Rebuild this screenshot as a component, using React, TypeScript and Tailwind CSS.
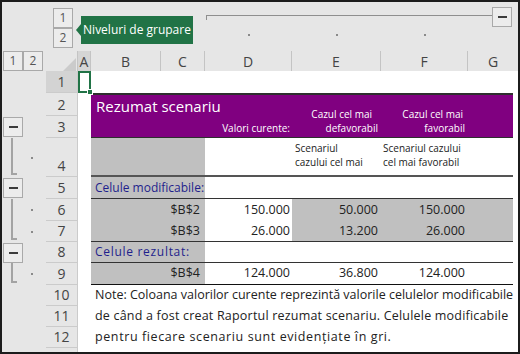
import React from "react";

type OutlineProps = {
	button?: boolean;
	line?: boolean;
	hook?: boolean;
	dot?: boolean;
};

const GRID = "grid grid-cols-[44px_32px_13px_70px_44px_87px_89px_87px_45px_1fr]";
const TABLE = "grid h-full grid-cols-[114px_87px_89px_87px_45px]";

function LevelBtn({ children, minus }: { children?: React.ReactNode; minus?: boolean }) {
	return (
		<div className="flex h-[20px] w-[20px] shrink-0 items-center justify-center border border-[#a9a9a9] bg-[#ececec] text-[12px] leading-none text-[#555]">
			{minus ? <div className="h-[2px] w-[9px] bg-[#3c3c3c]" /> : children}
		</div>
	);
}

function Outline({ button, line, hook, dot }: OutlineProps) {
	return (
		<div className="flex w-[44px] shrink-0">
			{button && (
				<div className="ml-px mt-px">
					<LevelBtn minus />
				</div>
			)}
			{line && (
				<div
					className={`ml-[9px] w-[6px] border-l-2 border-[#a3a3a3] ${hook ? "mb-[2px] border-b-2" : ""}`}
				/>
			)}
			{dot && <div className="ml-[14px] h-[2px] w-[2px] self-center bg-[#8a8a8a]" />}
		</div>
	);
}

function RowNum({ n, h, selected }: { n?: number; h: string; selected?: boolean }) {
	return (
		<div
			className={`flex w-[32px] items-end justify-center border-b border-r border-[#cbcbcb] pb-px text-[14px] leading-[18px] text-[#444] ${h} ${
				selected ? "bg-[#d3d3d3]" : ""
			}`}
		>
			{n}
		</div>
	);
}

function SheetRow({
	h,
	n,
	outline,
	selected,
	children,
}: {
	h: string;
	n?: number;
	outline?: OutlineProps;
	selected?: boolean;
	children?: React.ReactNode;
}) {
	return (
		<div className={`flex ${h}`}>
			<Outline {...outline} />
			<RowNum n={n} h={h} selected={selected} />
			<div className="flex flex-1 bg-white">
				<div className={`relative w-[13px] shrink-0 ${selected ? "border-2 border-[#217346]" : ""}`}>
					{selected && (
						<div className="absolute -bottom-[4px] -right-[4px] z-10 h-[6px] w-[6px] border border-white bg-[#217346]" />
					)}
				</div>
				<div className="w-[422px] shrink-0">{children}</div>
			</div>
		</div>
	);
}

function ValueRow({ cells, line }: { cells: string[]; line?: string }) {
	return (
		<div className={`${TABLE} text-[12.5px] text-[#222] ${line ?? ""}`}>
			<div className="flex items-center justify-end bg-[#c0c0c0] pr-[5px]">{cells[0]}</div>
			<div className="flex items-center justify-end pr-[2px]">{cells[1]}</div>
			<div className="flex items-center justify-end bg-[#c0c0c0] pr-[3px]">{cells[2]}</div>
			<div className="flex items-center justify-end bg-[#c0c0c0] pr-[3px]">{cells[3]}</div>
			<div className="bg-[#c0c0c0]" />
		</div>
	);
}

function LabelRow({ label, spaced }: { label: string; spaced?: boolean }) {
	return (
		<div className={`${TABLE} border-b border-[#333]`}>
			<div
				className={`flex items-center bg-[#c0c0c0] pl-[4px] text-[12px] whitespace-nowrap text-[#1f1f8c] ${
					spaced ? "tracking-[0.7px]" : ""
				}`}
			>
				{label}
			</div>
		</div>
	);
}

function NoteRow({ text, spacing }: { text: string; spacing?: string }) {
	return (
		<div className={`flex h-full items-center pl-[4px] text-[12.5px] whitespace-nowrap text-[#222] ${spacing ?? ""}`}>
			{text}
		</div>
	);
}

function TopArea() {
	return (
		<div className={`relative h-[49px] ${GRID}`}>
			<div />
			<div className="flex flex-col pl-[7px] pt-[6px]">
				<LevelBtn>1</LevelBtn>
				<LevelBtn>2</LevelBtn>
			</div>
			<div className="col-span-3" />
			<div className="col-span-5 flex flex-col">
				<div className="flex items-start pr-[6px] pt-[5px]">
					<div className="ml-px mt-[8px] h-[5px] flex-1 border-l border-t border-[#8f8f8f]" />
					<LevelBtn minus />
				</div>
				<div className="mt-[7px] grid grid-cols-[87px_89px_87px]">
					<div className="mx-auto h-[2px] w-[2px] bg-[#8a8a8a]" />
					<div className="mx-auto h-[2px] w-[2px] bg-[#8a8a8a]" />
					<div className="mx-auto h-[2px] w-[2px] bg-[#8a8a8a]" />
				</div>
			</div>
			<div className="absolute left-[74px] top-[14px] flex items-center">
				<div className="h-0 w-0 border-y-[6px] border-r-[5px] border-y-transparent border-r-[#217346]" />
				<div className="flex h-[28px] w-[112px] items-center justify-center bg-[#217346] text-[12px] text-white">
					Niveluri de grupare
				</div>
			</div>
		</div>
	);
}

function HeaderRow() {
	const head = "flex items-center justify-center border-b border-r border-[#c4c4c4] text-[14px] text-[#444]";
	return (
		<div className={`h-[20px] ${GRID}`}>
			<div className="flex pl-px">
				<LevelBtn>1</LevelBtn>
				<LevelBtn>2</LevelBtn>
			</div>
			<div className="flex items-end justify-end border-b border-r border-[#c4c4c4] pb-px pr-px">
				<svg width="13" height="13" viewBox="0 0 13 13">
					<polygon points="13,0 13,13 0,13" fill="#cbcbcb" />
				</svg>
			</div>
			<div className={`${head} bg-[#d5d5d5]`}>A</div>
			<div className={head}>B</div>
			<div className={head}>C</div>
			<div className={head}>D</div>
			<div className={head}>E</div>
			<div className={head}>F</div>
			<div className={`${head} col-span-2 border-r-0`}>G</div>
		</div>
	);
}

export default function App() {
	return (
		<div className="h-[354px] w-[520px] overflow-hidden border-2 border-[#1c1c1c] bg-[#e6e6e6] font-['Open_Sans',sans-serif]">
			<TopArea />
			<HeaderRow />
			<SheetRow h="h-[22px]" n={1} selected />

			{/* rows 2-3: purple summary header */}
			<div className="flex h-[45px]">
				<div className="flex w-[44px] shrink-0 flex-col">
					<div className="h-[23px]" />
					<Outline button />
				</div>
				<div className="flex flex-col">
					<RowNum n={2} h="h-[23px]" />
					<RowNum n={3} h="h-[22px]" />
				</div>
				<div className="flex flex-1 bg-white">
					<div className="w-[13px] shrink-0" />
					<div className={`w-[422px] shrink-0 border-b border-t-2 border-[#2e2e2e] bg-[#800080] text-white ${TABLE}`}>
						<div className="pl-[5px] pt-px text-[15px] leading-[20px] whitespace-nowrap">Rezumat scenariu</div>
						<div className="flex items-end justify-end pb-[2px] pr-[2px] text-[10px] leading-[14px] whitespace-nowrap">
							Valori curente:
						</div>
						<div className="flex flex-col items-end justify-end pb-[2px] pr-[3px] text-[10px] leading-[14px] whitespace-nowrap">
							<span className="pr-[6px]">Cazul cel mai</span>
							<span>defavorabil</span>
						</div>
						<div className="flex flex-col items-end justify-end pb-[2px] pr-[3px] text-[10px] leading-[14px] whitespace-nowrap">
							<span className="pr-[2px]">Cazul cel mai</span>
							<span>favorabil</span>
						</div>
						<div />
					</div>
				</div>
			</div>

			<SheetRow h="h-[39px]" n={4} outline={{ line: true, hook: true, dot: true }}>
				<div className={`${TABLE} border-b-2 border-[#555] text-[10px] leading-[14px] text-[#222]`}>
					<div className="bg-[#c0c0c0]" />
					<div />
					<div className="pl-[3px] pt-[3px] whitespace-nowrap">
						Scenariul
						<br />
						cazului cel mai
					</div>
					<div className="col-span-2 pl-[2px] pt-[3px] whitespace-nowrap">
						Scenariul cazului
						<br />
						cel mai favorabil
					</div>
				</div>
			</SheetRow>
			<SheetRow h="h-[22px]" n={5} outline={{ button: true }}>
				<LabelRow label="Celule modificabile:" />
			</SheetRow>
			<SheetRow h="h-[22px]" n={6} outline={{ line: true, dot: true }}>
				<ValueRow cells={["$B$2", "150.000", "50.000", "150.000"]} />
			</SheetRow>
			<SheetRow h="h-[21px]" n={7} outline={{ line: true, hook: true, dot: true }}>
				<ValueRow cells={["$B$3", "26.000", "13.200", "26.000"]} line="border-b border-[#333]" />
			</SheetRow>
			<SheetRow h="h-[21px]" n={8} outline={{ button: true }}>
				<LabelRow label="Celule rezultat:" spaced />
			</SheetRow>
			<SheetRow h="h-[22px]" n={9} outline={{ line: true, hook: true, dot: true }}>
				<div className={`${TABLE} border-b border-[#111] text-[12.5px] text-[#222]`}>
					<div className="flex items-center justify-end bg-[#c0c0c0] pr-[5px]">$B$4</div>
					<div className="flex items-center justify-end pr-[2px]">124.000</div>
					<div className="flex items-center justify-end pr-[3px]">36.800</div>
					<div className="flex items-center justify-end pr-[3px]">124.000</div>
					<div />
				</div>
			</SheetRow>
			<SheetRow h="h-[21px]" n={10}>
				<NoteRow text="Note: Coloana valorilor curente reprezintă valorile celulelor modificabile" />
			</SheetRow>
			<SheetRow h="h-[21px]" n={11}>
				<NoteRow
					text="de când a fost creat Raportul rezumat scenariu. Celulele modificabile"
					spacing="tracking-[0.2px]"
				/>
			</SheetRow>
			<SheetRow h="h-[21px]" n={12}>
				<NoteRow text="pentru fiecare scenariu sunt evidențiate în gri." spacing="tracking-[0.6px]" />
			</SheetRow>
			<SheetRow h="h-[21px]" />
		</div>
	);
}
